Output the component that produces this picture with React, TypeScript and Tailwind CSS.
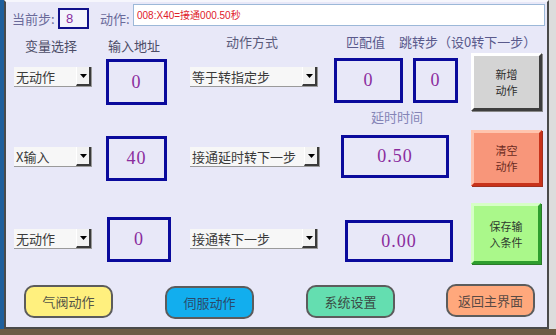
/* Step editor panel — input condition / action table */

const CN = "font-['Noto_Sans_CJK_SC',sans-serif]";

/* ── Combo box ─────────────────────────────────────── */

function Combo({ text, cls }: { text: string; cls: string }) {
  return (
    <div className={`flex h-[20px] bg-[#f7f7f7] border-b border-r border-[#9a9a9a] ${cls}`}>
      <span className={`flex-1 pl-[2px] text-[13px] leading-[19px] text-[#3a3a3a] whitespace-nowrap overflow-hidden ${CN}`}>
        {text}
      </span>
      <div className="w-[15px] flex items-center justify-center bg-[#f2f2f2] border-l border-l-white border-r-2 border-b-2 border-[#3a3a3a]">
        <svg width="7" height="4" viewBox="0 0 7 4">
          <path d="M0 0h7L3.5 4z" fill="#000" />
        </svg>
      </div>
    </div>
  );
}

/* ── Value box ─────────────────────────────────────── */

function ValueBox({ value, cls }: { value: string; cls: string }) {
  return (
    <div
      className={`flex items-center justify-center border-[3px] border-[#0a0a9c] text-[18px] tracking-[1px] text-[#8a2c9e] font-['Liberation_Serif',serif] ${cls}`}
    >
      {value}
    </div>
  );
}

/* ── Bevel button ──────────────────────────────────── */

function BevelButton({ lines, cls }: { lines: [string, string]; cls: string }) {
  return (
    <div className={`flex items-center justify-center border-[3px] ${cls}`}>
      <span className={`text-center text-[11px] leading-[16px] ${CN}`}>
        {lines[0]}
        <br />
        {lines[1]}
      </span>
    </div>
  );
}

/* ── Nav button ────────────────────────────────────── */

function NavButton({ text, cls }: { text: string; cls: string }) {
  return (
    <div
      className={`w-[89px] h-[33px] flex items-center justify-center rounded-[10px] border-2 border-[#5c5c5c] text-[13px] ${CN} ${cls}`}
    >
      {text}
    </div>
  );
}

export default function App() {
  return (
    <div className="w-[556px] h-[335px] bg-[#6e5c43] overflow-hidden">
      <div className="flex h-[329px]">
        <div className="w-[4px] bg-[#1f5f9c]" />

        <div className="w-[545px] flex flex-col bg-[#e8e8f8] border-2 border-[#4a4a4a] border-t-[#f6f6fc]">
          {/* Current step / action line */}
          <div className="flex items-start h-[28px]">
            <span className={`ml-[6px] w-[46px] mt-[6px] h-[21px] leading-[21px] text-[13px] text-[#6a6a9a] ${CN}`}>
              当前步:
            </span>
            <div className="w-[31px] h-[21px] mt-[6px] border-2 border-[#10108a] bg-[#f4f4fc] flex items-center pl-[6px] text-[13px] text-[#8a2c9e] font-['Liberation_Sans',sans-serif]">
              8
            </div>
            <span className={`ml-[11px] w-[33px] mt-[6px] h-[21px] leading-[21px] text-[13px] text-[#6a6a9a] ${CN}`}>
              动作:
            </span>
            <div className="w-[412px] h-[22px] mt-[2px] bg-white border border-[#9cb8d8] flex items-center pl-[3px] text-[10px] text-[#e0202a] font-['Liberation_Sans','Noto_Sans_CJK_SC',sans-serif]">
              008:X40=接通000.50秒
            </div>
          </div>

          {/* Column headers */}
          <div className={`flex items-start h-[23px] text-[13px] leading-[16px] whitespace-nowrap ${CN}`}>
            <span className="ml-[19px] w-[52px] mt-[8px] text-[#4c4c66]">变量选择</span>
            <span className="ml-[31px] w-[52px] mt-[8px] text-[#4c4c66]">输入地址</span>
            <span className="ml-[66px] w-[52px] mt-[4px] text-[#5a5a7a]">动作方式</span>
            <span className="ml-[68px] w-[40px] mt-[4px] text-[#5a5a8c]">匹配值</span>
            <span className="ml-[13px] w-[140px] mt-[4px] text-[#5a5a8c]">跳转步（设0转下一步）</span>
          </div>

          {/* Row 1 */}
          <div className="flex items-start h-[56px]">
            <Combo text="无动作" cls="ml-[8px] w-[78px] mt-[14px]" />
            <ValueBox value="0" cls="ml-[14px] w-[61px] h-[46px] mt-[6px]" />
            <Combo text="等于转指定步" cls="ml-[23px] w-[128px] mt-[14px]" />
            <ValueBox value="0" cls="ml-[16px] w-[69px] h-[45px] mt-[5px]" />
            <ValueBox value="0" cls="ml-[10px] w-[45px] h-[45px] mt-[5px]" />
            <BevelButton
              lines={['新增', '动作']}
              cls="ml-[13px] w-[71px] h-[58px] bg-[#d4d4d4] border-t-white border-l-white border-r-[#3e3e3e] border-b-[#3e3e3e] text-[#2c2c2c] shadow-[1px_1px_0_#888]"
            />
          </div>

          <div className="flex h-[21px]">
            <span className={`ml-[365px] text-[13px] leading-[16px] text-[#8484b6] ${CN}`}>延时时间</span>
          </div>

          {/* Row 2 */}
          <div className="flex items-start h-[73px]">
            <Combo text="X输入" cls="ml-[8px] w-[78px] mt-[17px]" />
            <ValueBox value="40" cls="ml-[14px] w-[61px] h-[45px] mt-[6px]" />
            <Combo text="接通延时转下一步" cls="ml-[23px] w-[130px] mt-[17px]" />
            <ValueBox value="0.50" cls="ml-[21px] w-[108px] h-[43px] mt-[5px]" />
            <BevelButton
              lines={['清空', '动作']}
              cls="ml-[22px] w-[71px] h-[56px] bg-[#f8967a] border-t-[#ffc4ae] border-l-[#ffc4ae] border-r-[#c8321a] border-b-[#c8321a] text-[#6a2a22] shadow-[1px_1px_0_#a03020]"
            />
          </div>

          {/* Row 3 */}
          <div className="flex items-start h-[81px]">
            <Combo text="无动作" cls="ml-[8px] w-[78px] mt-[26px]" />
            <ValueBox value="0" cls="ml-[15px] w-[64px] h-[45px] mt-[14px]" />
            <Combo text="接通转下一步" cls="ml-[19px] w-[128px] mt-[26px]" />
            <ValueBox value="0.00" cls="ml-[27px] w-[108px] h-[42px] mt-[17px]" />
            <BevelButton
              lines={['保存输', '入条件']}
              cls="ml-[18px] w-[70px] h-[61px] bg-[#aaf88a] border-t-[#d6ffc6] border-l-[#d6ffc6] border-r-[#2e9e2e] border-b-[#2e9e2e] text-[#2e3a2e] shadow-[1px_1px_0_#2a7a2a]"
            />
          </div>

          {/* Navigation */}
          <div className="flex items-start h-[34px]">
            <NavButton text="气阀动作" cls="ml-[18px] mt-[1px] bg-[#fff07e] text-[#555548]" />
            <NavButton text="伺服动作" cls="ml-[52px] mt-[2px] bg-[#12aeee] text-[#2a4a6a]" />
            <NavButton text="系统设置" cls="ml-[52px] mt-[1px] bg-[#64deb0] text-[#3a4a44]" />
            <NavButton text="返回主界面" cls="ml-[51px] bg-[#ffa87c] text-[#5a4a44]" />
          </div>
        </div>

        <div className="flex-1 bg-[#dcdcdc]" />
      </div>
    </div>
  );
}
